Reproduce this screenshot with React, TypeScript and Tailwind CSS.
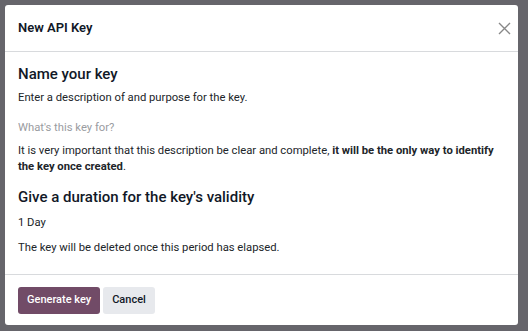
import React from 'react';

const App: React.FC = () => {
  return (
    <div className="w-[528px] h-[331px] bg-[#66656b] p-[5px] pr-[10px] font-['Roboto',sans-serif] text-[#212529]">
      <div className="bg-white rounded-[3px] h-[320px] flex flex-col">
        <div className="h-[47px] flex items-center justify-between pl-[13px] pr-[7px] border-b border-[#d8dadd]">
          <h4 className="text-[13px] font-semibold text-[#111827]">New API Key</h4>
          <button className="w-[13px] h-[13px] flex items-center justify-center text-[#888]">
            <svg width="13" height="13" viewBox="0 0 13 13" fill="none" stroke="currentColor" strokeWidth="1.4">
              <path d="M1 1L12 12M12 1L1 12" />
            </svg>
          </button>
        </div>
        <div className="flex-1 px-[13px] pt-[12px] text-[11.25px] leading-[16px]">
          <h3 className="text-[15px] font-medium leading-[20px] text-[#111827]">Name your key</h3>
          <p className="mt-[6px]">Enter a description of and purpose for the key.</p>
          <input
            className="mt-[14px] w-full outline-none placeholder:text-[#9a9ca1] text-[11.25px]"
            placeholder="What's this key for?"
          />
          <p className="mt-[7px]">
            It is very important that this description be clear and complete,{' '}
            <strong className="font-bold">it will be the only way to identify the key once created</strong>.
          </p>
          <h3 className="mt-[12px] text-[15px] font-medium leading-[20px] text-[#111827]">
            Give a duration for the key's validity
          </h3>
          <p className="mt-[8px]">1 Day</p>
          <p className="mt-[9px]">The key will be deleted once this period has elapsed.</p>
        </div>
        <div className="h-[51px] border-t border-[#d8dadd] flex items-center gap-[3px] px-[13px]">
          <button className="h-[27px] px-[9px] rounded-[3px] bg-[#714b67] text-white text-[11px] font-medium">
            Generate key
          </button>
          <button className="h-[27px] px-[9px] rounded-[3px] bg-[#e7e9ed] text-[#111827] text-[11px] font-medium">
            Cancel
          </button>
        </div>
      </div>
    </div>
  );
};

export default App;
